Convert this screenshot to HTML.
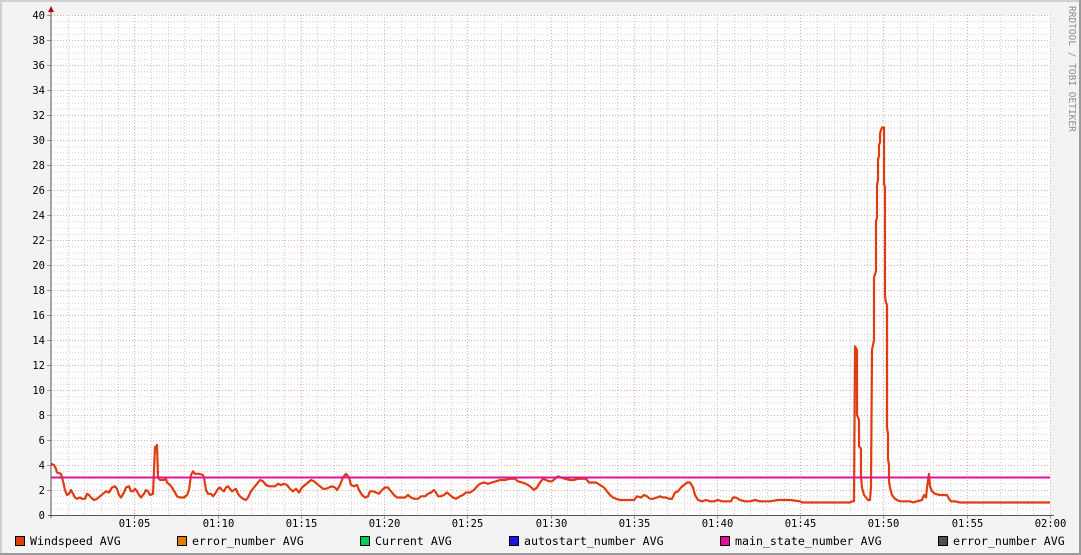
<!DOCTYPE html>
<html><head><meta charset="utf-8"><style>
html,body{margin:0;padding:0;background:#f3f3f3;}
body{width:1081px;height:555px;overflow:hidden;position:relative;}
svg{position:absolute;left:0;top:0;}
text{font-family:"DejaVu Sans Mono","Liberation Mono",monospace;}
</style></head><body>
<svg id="g" width="1081" height="555" xmlns="http://www.w3.org/2000/svg">
<rect x="0" y="0" width="1081" height="555" fill="#f3f3f3"/>
<line x1="0" y1="1" x2="1081" y2="1" stroke="#cfcfcf" stroke-width="2"/>
<line x1="1" y1="0" x2="1" y2="555" stroke="#cfcfcf" stroke-width="2"/>
<line x1="0" y1="554" x2="1081" y2="554" stroke="#9a9a9a" stroke-width="2"/>
<line x1="1080" y1="0" x2="1080" y2="555" stroke="#9a9a9a" stroke-width="2"/>
<rect x="51" y="15" width="999" height="500" fill="#ffffff"/>
<g id="grid"></g>
<text x="1069" y="6" font-size="9.5" fill="#909090" transform="rotate(90 1069 6)">RRDTOOL / TOBI OETIKER</text>
<g id="data"></g>
<line x1="51" y1="477.5" x2="1050" y2="477.5" stroke="#e0109c" stroke-width="2"/>
<line x1="51" y1="12" x2="51" y2="518" stroke="#555" stroke-width="1"/>
<line x1="48" y1="515.5" x2="1054" y2="515.5" stroke="#555" stroke-width="1"/>
<polygon points="48,12 54,12 51,6" fill="#a01010"/>
<g id="leg" font-size="11.6" fill="#000">
<rect x="15.5" y="536.5" width="9" height="9" fill="#e03c0f" stroke="#000"/><text x="30" y="545">Windspeed AVG</text>
<rect x="177.5" y="536.5" width="9" height="9" fill="#e07f00" stroke="#000"/><text x="192" y="545">error_number AVG</text>
<rect x="360.5" y="536.5" width="9" height="9" fill="#00d050" stroke="#000"/><text x="375" y="545">Current AVG</text>
<rect x="509.5" y="536.5" width="9" height="9" fill="#2010f0" stroke="#000"/><text x="524" y="545">autostart_number AVG</text>
<rect x="720.5" y="536.5" width="9" height="9" fill="#e0109c" stroke="#000"/><text x="735" y="545">main_state_number AVG</text>
<rect x="938.5" y="536.5" width="9" height="9" fill="#505050" stroke="#000"/><text x="953" y="545">error_number AVG</text>
</g>
</svg>
<script>
var NS="http://www.w3.org/2000/svg",grid=document.getElementById('grid'),svg=document.getElementById('g');
function el(t,a,p){var e=document.createElementNS(NS,t);for(var k in a)e.setAttribute(k,a[k]);(p||grid).appendChild(e);return e;}
var px=999/60;
for(var m=1;m<=60;m++){var x=Math.round(51+m*px)+0.5;var maj=m%5==0;
 el('line',{x1:x,y1:15,x2:x,y2:515,stroke:maj?'#eeaaaa':'#d0d0d0','stroke-dasharray':'1,2','stroke-width':1});
 if(maj){el('line',{x1:x,y1:515,x2:x,y2:519,stroke:'#e08080'});
  var mm=m%60;var t=el('text',{x:x,y:527,'font-size':10.5,'text-anchor':'middle',fill:'#000'});
  t.textContent='0'+(m==60?2:1)+':'+(mm<10?'0':'')+mm;}}
for(var i=1;i<=80;i++){var y=515-i*6.25+0.5;var maj=i%4==0;
 el('line',{x1:51,y1:y,x2:1050,y2:y,stroke:maj?'#eeaaaa':'#d0d0d0','stroke-dasharray':'1,2','stroke-width':1});
 if(maj){el('line',{x1:47,y1:y,x2:51,y2:y,stroke:'#e08080'});}}
for(var v=0;v<=40;v+=2){var t=el('text',{x:45,y:515-v*12.5+4,'font-size':10.5,'text-anchor':'end',fill:'#000'});t.textContent=v;}
var d=[51,4.1,54,4.0,56,3.7,57,3.4,61,3.3,63,2.7,65,2.0,67,1.6,69,1.7,71,2.0,73,1.7,75,1.4,77,1.3,80,1.4,82,1.3,85,1.3,87,1.7,89,1.6,91,1.4,94,1.2,97,1.3,100,1.5,103,1.7,106,1.9,109,1.8,112,2.2,115,2.3,117,2.1,119,1.6,121,1.4,124,1.8,126,2.2,129,2.3,131,1.9,133,1.9,135,2.1,137,1.9,139,1.6,141,1.4,144,1.7,146,2.0,148,1.9,150,1.6,153,1.7,155,5.4,157,5.6,158,3.0,160,2.8,164,2.8,166,2.9,167,2.6,170,2.4,172,2.2,175,1.8,177,1.5,180,1.4,184,1.4,187,1.6,189,2.0,191,3.2,193,3.5,195,3.3,199,3.3,203,3.2,204,3.0,206,2.0,208,1.7,211,1.7,213,1.5,215,1.7,218,2.1,220,2.2,222,2.0,224,1.9,226,2.2,228,2.3,230,2.1,232,1.9,234,2.0,236,2.1,238,1.7,240,1.5,243,1.3,246,1.2,248,1.4,251,1.9,254,2.2,257,2.5,260,2.8,263,2.7,266,2.4,269,2.3,272,2.3,275,2.3,278,2.5,281,2.4,284,2.5,287,2.4,290,2.1,293,1.9,296,2.1,299,1.8,302,2.2,305,2.4,308,2.6,311,2.8,314,2.7,317,2.5,320,2.3,323,2.1,326,2.1,329,2.2,332,2.3,335,2.2,337,2.0,340,2.4,343,3.0,346,3.3,349,3.0,351,2.4,354,2.3,357,2.4,359,2.0,362,1.6,365,1.4,368,1.5,370,1.9,373,1.9,376,1.8,379,1.7,382,2.0,385,2.2,388,2.2,391,1.9,394,1.6,397,1.4,401,1.4,405,1.4,408,1.6,411,1.4,414,1.3,418,1.3,421,1.5,425,1.5,428,1.7,431,1.8,434,2.0,436,1.8,438,1.5,441,1.5,444,1.6,447,1.8,450,1.6,453,1.4,456,1.3,460,1.5,463,1.6,466,1.8,470,1.8,474,2.0,477,2.3,480,2.5,484,2.6,488,2.5,492,2.6,496,2.7,500,2.8,505,2.8,510,2.9,515,2.9,518,2.7,522,2.6,526,2.5,530,2.3,534,2.0,537,2.2,540,2.6,543,2.9,546,2.8,549,2.7,552,2.7,555,2.9,558,3.1,561,3.0,565,2.9,570,2.8,574,2.8,578,2.9,582,2.9,586,2.9,589,2.6,592,2.6,596,2.6,600,2.4,604,2.2,607,1.9,610,1.6,613,1.4,616,1.3,620,1.2,625,1.2,630,1.2,634,1.2,637,1.5,641,1.4,644,1.6,647,1.5,650,1.3,653,1.3,657,1.4,660,1.5,663,1.4,666,1.4,669,1.3,672,1.3,675,1.8,678,1.9,681,2.2,684,2.4,687,2.6,690,2.6,693,2.2,695,1.6,698,1.2,702,1.1,706,1.2,710,1.1,714,1.1,718,1.2,722,1.1,727,1.1,731,1.1,733,1.4,736,1.4,740,1.2,745,1.1,750,1.1,755,1.2,760,1.1,770,1.1,778,1.2,790,1.2,800,1.1,802,1.0,850,1.0,852,1.1,854,1.1,855,13.5,857,13.2,857,8,859,7.6,859,5.5,861,5.3,861,3.0,862,2.2,864,1.6,866,1.4,868,1.2,870,1.2,871,2.3,872,13.2,874,14,874,19,876,19.5,876,23.5,877,23.8,877,26.4,878,26.8,878,28.5,879,28.7,879,29.6,880,29.8,880,30.5,881,30.8,882,31.0,884,31.0,884,26.5,885,26.2,885,17.5,886,17.0,887,16.8,887,7,888,6.5,888,4.5,889,4.0,889,2.7,890,2.2,892,1.6,895,1.3,897,1.2,900,1.1,905,1.1,910,1.1,913,1.0,917,1.1,922,1.2,924,1.6,926,1.4,927,2.2,929,3.3,930,2.3,932,1.9,935,1.7,940,1.6,947,1.6,949,1.3,951,1.1,955,1.1,960,1.0,1000,1.0,1030,1.0,1050,1.0];
var p=[];for(var i=0;i<d.length;i+=2)p.push(d[i]+','+(515-d[i+1]*12.5).toFixed(1));
el('polyline',{points:p.join(' '),fill:'none',stroke:'#e03c0f','stroke-width':2.2,'stroke-linejoin':'round'},document.getElementById('data'));
</script>
</body></html>
